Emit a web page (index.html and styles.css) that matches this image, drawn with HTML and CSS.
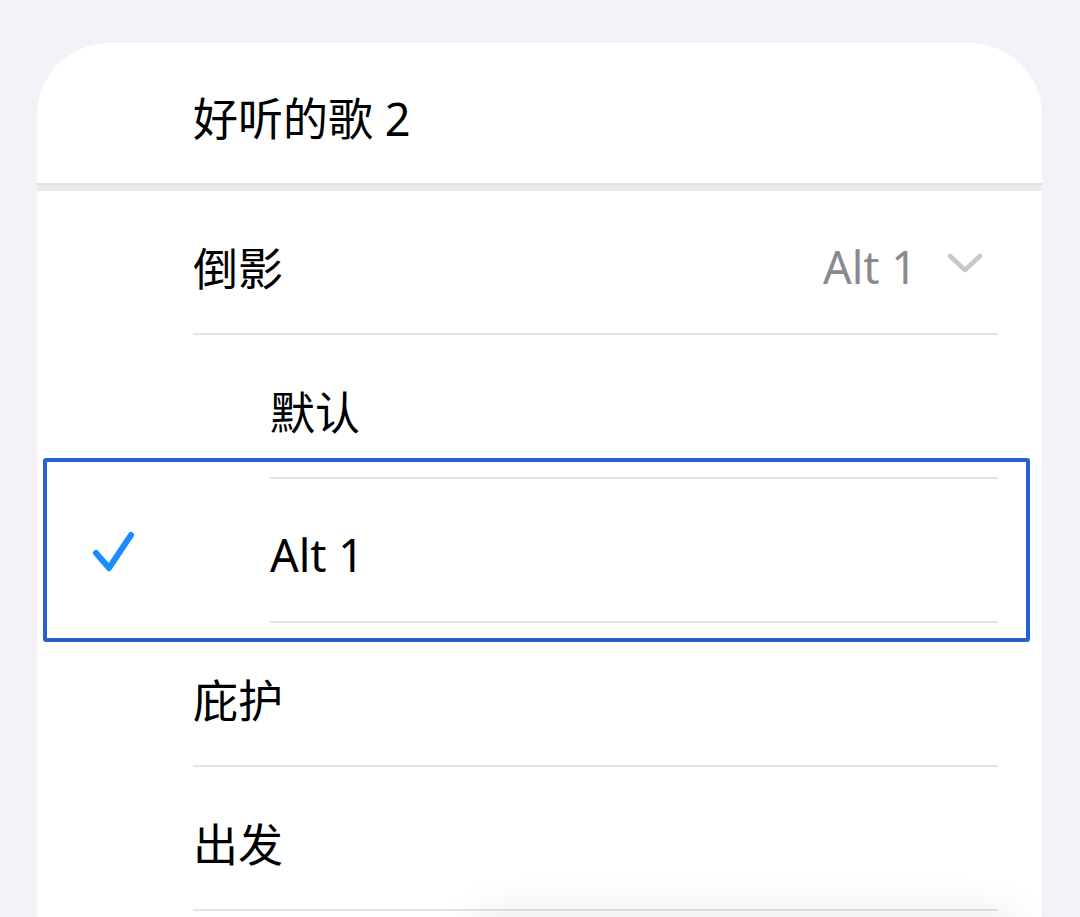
FILE: index.html
```html
<!DOCTYPE html>
<html>
<head>
    <title>好听的歌 2</title>
    <meta name="viewport" content="width=device-width, initial-scale=1.0">
    <link rel="stylesheet" href="styles.css">
</head>
<body>
    <div class="card">
        <div class="header">
            <div class="title">好听的歌 2</div>
        </div>
        <div class="gap"></div>

        <div class="row">
            <div class="row-body">
                <span class="label">倒影</span>
                <span class="value">Alt 1
                    <svg class="chevron" width="36" height="20" viewBox="0 0 36 20">
                        <path d="M3 3 L18 17 L33 3" fill="none" stroke="#c7c7cc" stroke-width="4.5" stroke-linecap="round" stroke-linejoin="round"/>
                    </svg>
                </span>
            </div>
        </div>

        <div class="row option">
            <div class="check-col"></div>
            <div class="row-body">
                <span class="label">默认</span>
            </div>
        </div>

        <div class="row option selected">
            <div class="check-col">
                <svg class="check" width="48" height="48" viewBox="0 0 48 48">
                    <path d="M6 23 L19 38 L41 5" fill="none" stroke="#1a8cff" stroke-width="6" stroke-linecap="round" stroke-linejoin="round"/>
                </svg>
            </div>
            <div class="row-body">
                <span class="label">Alt 1</span>
            </div>
        </div>

        <div class="row">
            <div class="row-body">
                <span class="label">庇护</span>
            </div>
        </div>

        <div class="row">
            <div class="row-body">
                <span class="label">出发</span>
            </div>
        </div>
    </div>
    <div class="menu-shadow"></div>
</body>
</html>
```

FILE: styles.css
```css
html, body {
    margin: 0;
    height: 917px;
    overflow: hidden;
}

body {
    background-color: #f2f2f7;
    font-family: "Noto Sans", "Noto Sans CJK SC", sans-serif;
    font-size: 45px;
    color: #000;
}

.card {
    margin: 43px 38px 0 37px;
    min-height: 874px;
    background-color: #fff;
    border-radius: 72px 72px 0 0;
}

.header {
    height: 140px;
    display: flex;
    align-items: center;
    padding-left: 156px;
    padding-top: 6px;
    box-sizing: border-box;
}

.gap {
    height: 8px;
    background-color: #eaeaec;
    border-top: 2px solid #e2e2e4;
    box-sizing: border-box;
}

.row {
    display: flex;
    position: relative;
    padding-left: 156px;
}

.row.option {
    padding-left: 0;
}

.check-col {
    width: 233px;
    display: flex;
    align-items: center;
    padding-left: 53px;
    padding-top: 6px;
    box-sizing: border-box;
}

.row-body {
    flex: 1;
    height: 144px;
    box-sizing: border-box;
    margin-right: 44px;
    padding-top: 8px;
    border-bottom: 2px solid #e3e3e5;
    display: flex;
    align-items: center;
    justify-content: space-between;
}

.value {
    display: flex;
    align-items: center;
    gap: 30px;
    color: #8a8a8e;
    margin-right: 15px;
}

.chevron {
    margin-top: -6px;
}

.selected::before {
    content: '';
    position: absolute;
    top: -21px;
    bottom: -19px;
    left: 6px;
    right: 12px;
    border: 4px solid #2d5fd4;
    border-radius: 3px;
    pointer-events: none;
}

.menu-shadow {
    position: fixed;
    left: 470px;
    right: 60px;
    top: 917px;
    height: 60px;
    border-radius: 30px;
    box-shadow: 0 0 40px 6px rgba(0, 0, 0, 0.08);
}
```
